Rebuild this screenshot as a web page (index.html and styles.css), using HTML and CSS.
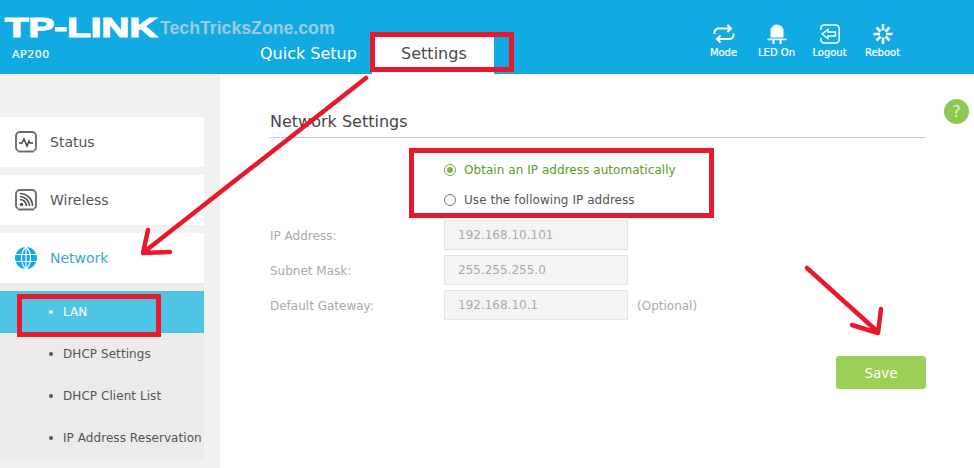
FILE: index.html
```html
<!DOCTYPE html>
<html lang="en">
<head>
<meta charset="utf-8">
<title>Network Settings</title>
<link rel="stylesheet" href="styles.css">
</head>
<body>
<div class="page">
  <header class="header">
    <div class="brand">
      <div class="brand-top"><span class="logo">TP-LINK</span><span class="watermark">TechTricksZone.com</span></div>
      <div class="model">AP200</div>
    </div>
    <nav class="tabs">
      <span class="tab">Quick Setup</span>
      <span class="tab tab-active">Settings</span>
    </nav>
    <div class="actions">
      <div class="action">
        <svg class="action-icon" viewBox="0 0 22 20"><path d="M1.500 10V8.500a4 4 0 0 1 4-4H18M14.500 1l3.500 3.500L14.500 8M20.500 9.500V11a4 4 0 0 1-4 4H4M7.500 11.500 4 15l3.500 3.500" fill="none" stroke="#fff" stroke-width="2"/></svg>
        <span>Mode</span>
      </div>
      <div class="action">
        <svg class="action-icon" viewBox="0 0 22 20"><path d="M4.500 13.500V7a6.500 6.500 0 0 1 13 0v6.500z" fill="#fff"/><path d="M1.500 14.500h19v1.800h-19zM6.500 15h2v5h-2zM13.500 15h2v5h-2z" fill="#fff"/></svg>
        <span>LED On</span>
      </div>
      <div class="action">
        <svg class="action-icon" viewBox="0 0 22 20"><path d="M1.800 6V4.500a3.500 3.500 0 0 1 3.500-3.500h11.400a3.500 3.500 0 0 1 3.500 3.500v11a3.500 3.500 0 0 1-3.500 3.500H5.300a3.500 3.500 0 0 1-3.500-3.500V14" fill="none" stroke="#fff" stroke-width="1.500"/><path d="M3 10l6-4.500V8h7.500v4H9v2.500z" fill="none" stroke="#fff" stroke-width="1.400"/></svg>
        <span>Logout</span>
      </div>
      <div class="action">
        <svg class="action-icon" viewBox="0 0 22 20"><path d="M11 0v6.500M11 13.500V20M1.500 10h6.500M14 10h6.500M4.500 3.500l4 4M17.500 3.500l-4 4M4.500 16.500l4-4M17.500 16.500l-4-4" fill="none" stroke="#fff" stroke-width="2.600"/></svg>
        <span>Reboot</span>
      </div>
    </div>
  </header>
  <div class="body">
    <aside class="sidebar">
      <div class="menu-item">
        <svg class="menu-icon" viewBox="0 0 22 22"><path d="M3 19.500 A3 3 0 0 1 1 17V5a4 4 0 0 1 4-4h12a4 4 0 0 1 4 4v12a3 3 0 0 1-2 2.500M3 20.500h16" fill="none" stroke="#6e6e6e" stroke-width="1.900"/><path d="M4 12h3l2-4 3 7 2-5 1 2h3" fill="none" stroke="#444" stroke-width="1.500"/></svg>
        <span>Status</span>
      </div>
      <div class="menu-item">
        <svg class="menu-icon" viewBox="0 0 22 22"><path d="M3 19.500 A3 3 0 0 1 1 17V5a4 4 0 0 1 4-4h12a4 4 0 0 1 4 4v12a3 3 0 0 1-2 2.500M3 20.500h16" fill="none" stroke="#6e6e6e" stroke-width="1.900"/><circle cx="6.500" cy="15.500" r="1.800" fill="#555"/><path d="M5 10.500a6.500 6.500 0 0 1 6.500 6.500M5 7.500A9.500 9.500 0 0 1 14.500 17M5 4.500A12.500 12.500 0 0 1 17.500 17" fill="none" stroke="#555" stroke-width="1.700"/></svg>
        <span>Wireless</span>
      </div>
      <div class="menu-item menu-item-active">
        <svg class="menu-icon" viewBox="0 0 22 22"><circle cx="11" cy="11" r="11" fill="#12aae2"/><path d="M0 7.500h22M0 14.500h22M11 0v22M11 0C5 5 5 17 11 22M11 0c6 5 6 17 0 22" fill="none" stroke="#fff" stroke-width="1.200"/></svg>
        <span>Network</span>
      </div>
      <ul class="submenu">
        <li class="sub-active">LAN</li>
        <li>DHCP Settings</li>
        <li>DHCP Client List</li>
        <li>IP Address Reservation</li>
      </ul>
    </aside>
    <main class="main">
      <h1 class="title">Network Settings</h1>
      <div class="radios">
        <label class="radio radio-on"><i class="dot"></i>Obtain an IP address automatically</label>
        <label class="radio"><i class="dot"></i>Use the following IP address</label>
      </div>
      <div class="field"><span class="field-label">IP Address:</span><span class="input">192.168.10.101</span></div>
      <div class="field"><span class="field-label">Subnet Mask:</span><span class="input">255.255.255.0</span></div>
      <div class="field"><span class="field-label">Default Gateway:</span><span class="input">192.168.10.1</span><span class="hint">(Optional)</span></div>
      <div class="save-row"><button class="save" type="button">Save</button></div>
    </main>
  </div>
  <div class="help">?</div>
  <svg class="marks" viewBox="0 0 974 468">
    <g fill="none" stroke="#e8192c" stroke-width="5">
      <rect x="372.500" y="34.500" width="139" height="35"/>
      <rect x="19.500" y="296.500" width="139" height="38"/>
      <rect x="411.500" y="150.500" width="300" height="65"/>
    </g>
    <g fill="none" stroke="#e8192c" stroke-width="4.500" stroke-linecap="round" stroke-linejoin="round">
      <path d="M366 78 144 252M148 230l-5 23 27-1"/>
      <path d="M807 268l71 64M881 309l-3 24-26-8"/>
    </g>
  </svg>
</div>
</body>
</html>
```

FILE: styles.css
```css
* { box-sizing: border-box; }
html, body { margin: 0; height: 100%; }
body { font-family: "DejaVu Sans", sans-serif; color: #555; background: #fff; overflow: hidden; }
.page { position: relative; width: 974px; height: 468px; overflow: hidden; }

.header { display: flex; height: 74px; background: #12aae2; color: #fff; }
.brand { width: 260px; padding: 14px 0 0 5px; flex: none; }
.brand-top { display: flex; align-items: center; height: 28px; white-space: nowrap; }
.logo { flex: none; width: 155px; font: 900 27px/28px "Liberation Sans", sans-serif; transform: scaleX(1.43); transform-origin: left center; -webkit-text-stroke: 1.200px #fff; }
.watermark { flex: none; font: 700 17.700px/28px "Liberation Sans", sans-serif; color: #9dcbe0; }
.model { margin: 6px 0 0 7px; font-size: 11px; line-height: 14px; letter-spacing: 0.5px; -webkit-text-stroke: 0.200px #fff; }

.tabs { display: flex; align-items: flex-end; width: 436px; flex: none; font-size: 16px; }
.tab { height: 41px; line-height: 41px; }
.tab-active { width: 122px; margin-left: 15px; padding-left: 2px; text-align: center; background: #fff; color: #4a4a4a; }

.actions { display: flex; padding: 24px 0 0 1px; }
.action { display: flex; flex-direction: column; align-items: center; width: 53px; font-size: 10px; line-height: 12px; -webkit-text-stroke: 0.200px #fff; }
.action-icon { display: block; width: 22px; height: 20px; margin-bottom: 3px; }

.body { display: flex; height: 394px; }
.sidebar { width: 220px; flex: none; padding-top: 43px; background: #f1f1f1; }
.menu-item { display: flex; align-items: center; gap: 13px; width: 204px; height: 50px; margin-bottom: 8px; padding-left: 15px; background: #fff; font-size: 14px; }
.menu-item:nth-of-type(3) { margin-bottom: 0; }
.menu-icon { width: 22px; height: 22px; flex: none; }
.menu-item-active { color: #3ea5d6; }
.submenu { width: 204px; margin: 0; padding: 8px 0 0; list-style: none; background: #ebebeb; font-size: 12px; letter-spacing: 0.06px; }
.submenu li { position: relative; height: 42px; padding-left: 63px; line-height: 42px; white-space: nowrap; }
.submenu li::before { content: ""; position: absolute; left: 49px; top: 19px; width: 4px; height: 4px; border-radius: 50%; background: #555; }
.sub-active { background: #50c4e4; color: #fff; }
.submenu .sub-active::before { background: #fff; }

.main { flex: 1; padding: 37px 48px 0 50px; }
.title { margin: 0; height: 27px; border-bottom: 1px solid #ccc; font-size: 16px; font-weight: 400; line-height: 22px; color: #444; }
.radios { display: flex; flex-direction: column; padding: 17px 0 0 174px; height: 82px; letter-spacing: 0.05px; }
.radio { display: flex; align-items: center; gap: 8px; height: 30px; font-size: 12px; }
.dot { position: relative; width: 12px; height: 12px; border: 1px solid #777; border-radius: 50%; }
.radio-on { color: #5f9a28; }
.radio-on .dot { border-color: #7d9a66; }
.radio-on .dot::after { content: ""; position: absolute; inset: 2px; border-radius: 50%; background: #7cb83e; }
.field { display: flex; align-items: center; height: 30px; margin-bottom: 5px; font-size: 12px; color: #aaa; }
.field-label { width: 174px; flex: none; padding-top: 1px; }
.input { width: 184px; height: 30px; padding-left: 13px; line-height: 29px; border: 1px solid #e4e4e4; background: #f4f4f4; }
.hint { margin-left: 9px; padding-top: 1px; }
.save-row { display: flex; justify-content: flex-end; margin-top: 36px; }
.save { width: 90px; height: 33px; padding: 0; border: 0; border-radius: 3px; background: #9ccf55; color: #fff; font: 13.500px "DejaVu Sans", sans-serif; }

.help { position: absolute; left: 944px; top: 99px; width: 25px; height: 25px; border-radius: 50%; background: #8fc84e; color: #e4f2d0; font-size: 16px; line-height: 25px; text-align: center; }
.marks { position: absolute; left: 0; top: 0; width: 974px; height: 468px; pointer-events: none; }
```
